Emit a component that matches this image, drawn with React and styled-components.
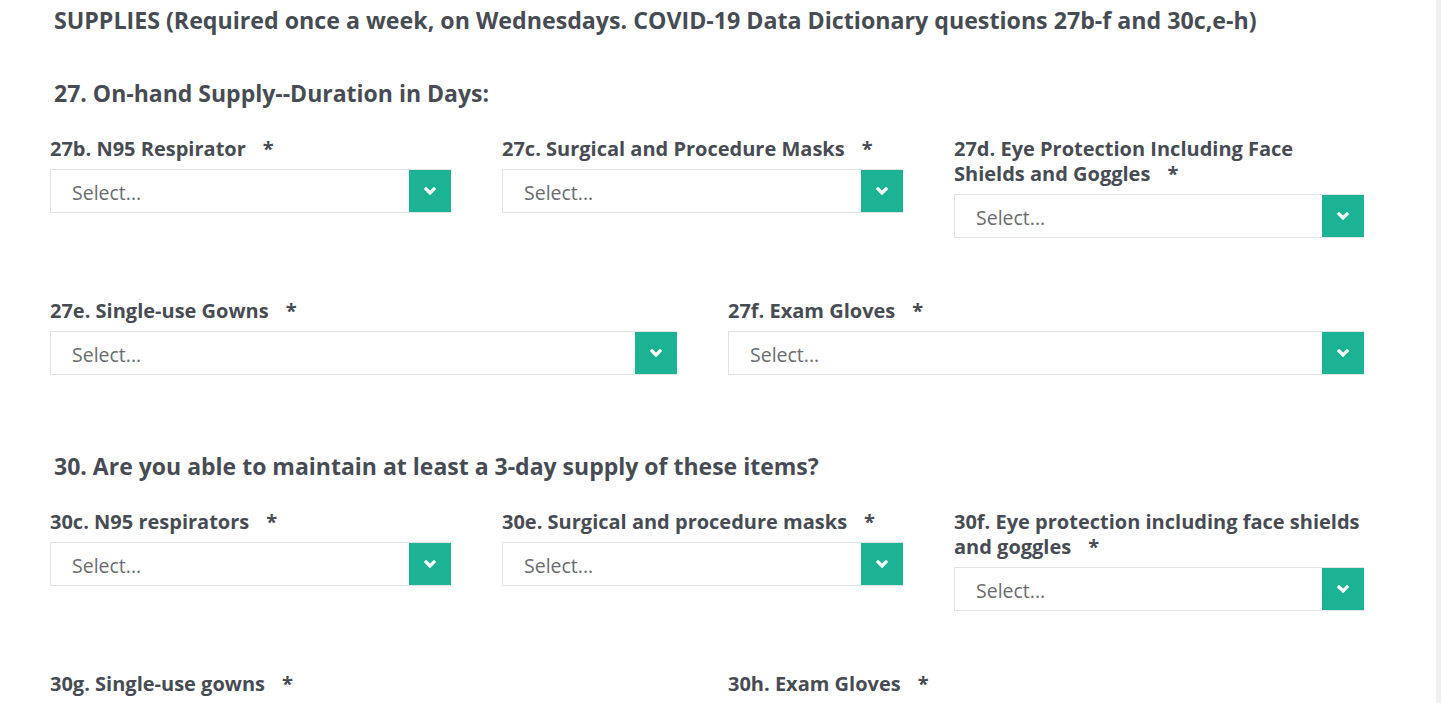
import React from "react";
import styled, { createGlobalStyle } from "styled-components";

const Global = createGlobalStyle`
  html, body { margin: 0; padding: 0; background: #fff; }
  body { font-family: "Open Sans", "Noto Sans", sans-serif; color: #474c54; }
`;

const Page = styled.div`
  position: relative;
  width: 1441px;
  height: 703px;
  overflow: hidden;
  display: flex;
`;

const Main = styled.div`
  flex: 1;
  padding: 7px 0 0 50px;
  box-sizing: border-box;
`;

const Edge = styled.div`
  width: 5px;
  background: #eeeef3;
  flex: none;
`;

const Title = styled.h2`
  margin: 0 0 47px 4px;
  font-size: 23.2px;
  line-height: 26px;
  font-weight: 700;
  white-space: nowrap;
`;

const SectionHeading = styled.h3`
  margin: 0 0 30px 4px;
  font-size: 23px;
  line-height: 26px;
  font-weight: 700;
`;

const Row = styled.div`
  display: grid;
  grid-template-columns: ${(p) => p.$cols};
  column-gap: 51px;
  align-items: start;
  margin-bottom: ${(p) => p.$mb}px;
`;

const Field = styled.div`
  display: flex;
  flex-direction: column;
`;

const Label = styled.label`
  font-size: 20px;
  line-height: 25px;
  font-weight: 700;
  margin-bottom: 8px;
`;

const Star = styled.span`
  margin-left: 17px;
`;

const SelectBox = styled.div`
  position: relative;
  height: 44px;
  border: 1px solid #e3e3e3;
  box-sizing: border-box;
  display: flex;
  align-items: center;
  padding: 2px 0 0 21px;
  font-size: 19.5px;
  color: #6a6d70;
  background: #fff;
`;

const Arrow = styled.div`
  position: absolute;
  top: 0;
  right: -1px;
  bottom: 0;
  width: 42px;
  background: #1bb394;
  display: flex;
  align-items: center;
  justify-content: center;
`;

const Chevron = () => (
  <svg width="12" height="9" viewBox="0 0 12 9">
    <polyline points="2,2 6,6 10,2" fill="none" stroke="#fff" strokeWidth="3.2" strokeLinecap="square" />
  </svg>
);

const Select = () => (
  <SelectBox>
    Select...
    <Arrow><Chevron /></Arrow>
  </SelectBox>
);

const F = ({ label }) => (
  <Field>
    <Label>{label}<Star>*</Star></Label>
    <Select />
  </Field>
);

export default function App() {
  return (
    <Page>
      <Global />
      <Main>
        <Title>SUPPLIES (Required once a week, on Wednesdays. COVID-19 Data Dictionary questions 27b-f and 30c,e-h)</Title>
        <SectionHeading>27. On-hand Supply--Duration in Days:</SectionHeading>
        <Row $cols="401px 401px 410px" $mb={60}>
          <F label="27b. N95 Respirator" />
          <F label="27c. Surgical and Procedure Masks" />
          <F label="27d. Eye Protection Including Face Shields and Goggles" />
        </Row>
        <Row $cols="627px 636px" $mb={78}>
          <F label="27e. Single-use Gowns" />
          <F label="27f. Exam Gloves" />
        </Row>
        <SectionHeading>30. Are you able to maintain at least a 3-day supply of these items?</SectionHeading>
        <Row $cols="401px 401px 410px" $mb={60}>
          <F label="30c. N95 respirators" />
          <F label="30e. Surgical and procedure masks" />
          <F label="30f. Eye protection including face shields and goggles" />
        </Row>
        <Row $cols="627px 636px" $mb={60}>
          <F label="30g. Single-use gowns" />
          <F label="30h. Exam Gloves" />
        </Row>
      </Main>
      <Edge />
    </Page>
  );
}
